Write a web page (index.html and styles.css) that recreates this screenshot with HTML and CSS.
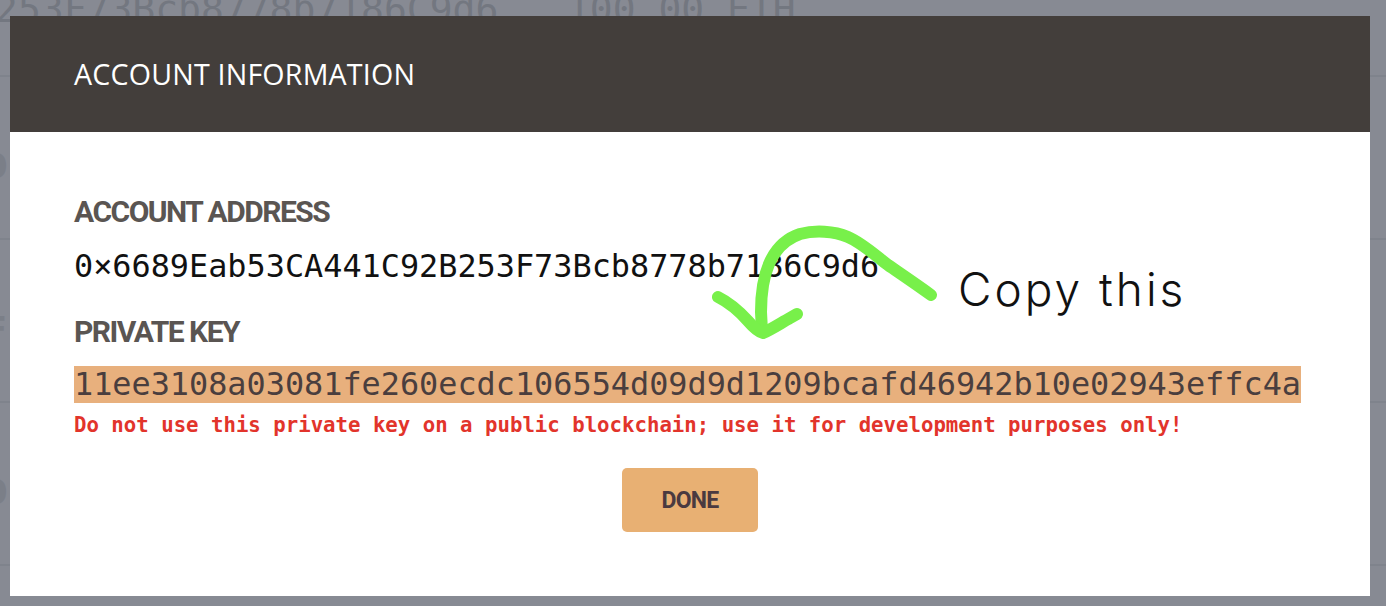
FILE: index.html
```html
<!DOCTYPE html>
<html lang="en">
<head>
<meta charset="utf-8">
<title>Account Information</title>
<link rel="stylesheet" href="styles.css">
</head>
<body>
<div class="page">
  <div class="row row-first"><span class="bg-text">253F73Bcb8778b7186C9d6   100.00 ETH</span></div>
  <div class="row"><span class="edge">0</span></div>
  <div class="row"><span class="edge">F</span></div>
  <div class="row"><span class="edge">0</span></div>
</div>

<div class="modal">
  <div class="modal-header">ACCOUNT INFORMATION</div>
  <div class="modal-body">
    <div class="label">ACCOUNT ADDRESS</div>
    <div class="mono address">0×6689Eab53CA441C92B253F73Bcb8778b7186C9d6</div>
    <div class="label label-key">PRIVATE KEY</div>
    <div class="key-row"><span class="mono key">11ee3108a03081fe260ecdc106554d09d9d1209bcafd46942b10e02943effc4a</span></div>
    <div class="warning">Do not use this private key on a public blockchain; use it for development purposes only!</div>
    <div class="actions"><button class="done">DONE</button></div>
  </div>
</div>

<svg class="annot" width="1386" height="606" viewBox="0 0 1386 606" aria-hidden="true">
  <path d="M931 295 C916 284 901 274 888 265 C875 255 862 243 848 237 C834 231 815 230 800 234 C785 239 775 250 769 264 C763 278 761 295 761 312 L762 331" fill="none" stroke="#78f04a" stroke-width="12" stroke-linecap="round" stroke-linejoin="round"/>
  <path d="M718 297 C730 303 740 312 748 321 C754 328 759 332 763 333 C772 329 781 323 790 318 L797 314" fill="none" stroke="#78f04a" stroke-width="12" stroke-linecap="round" stroke-linejoin="round"/>
</svg>
<div class="copy-note">Copy this</div>
</body>
</html>
```

FILE: styles.css
```css
html, body {
  margin: 0;
  padding: 0;
}
body {
  width: 1386px;
  height: 606px;
  overflow: hidden;
  background: #878a93;
  font-family: "Open Sans", "DejaVu Sans", sans-serif;
  position: relative;
}

/* background page under overlay */
.page {
  margin-top: -86px;
}
.row {
  box-sizing: border-box;
  height: 163px;
  border-bottom: 2px solid #7f838c;
  display: flex;
  align-items: center;
  overflow: hidden;
}
.row-first {
  align-items: flex-end;
  padding-bottom: 44px;
}
.bg-text {
  font-family: "DejaVu Sans Mono", "Liberation Mono", monospace;
  font-size: 38px;
  color: #737780;
  white-space: pre;
  margin-left: -5px;
}
.edge {
  font-family: "DejaVu Sans", sans-serif;
  font-weight: bold;
  font-size: 34px;
  color: #7b7f88;
  margin-left: -16px;
  margin-top: 16px;
}

/* modal */
.modal {
  position: absolute;
  top: 16px;
  left: 10px;
  width: 1360px;
  background: #ffffff;
}
.modal-header {
  box-sizing: border-box;
  height: 116px;
  background: #433e3b;
  color: #ffffff;
  display: flex;
  align-items: center;
  padding: 0 64px 2px;
  font-family: "Open Sans", sans-serif;
  font-size: 28.6px;
  letter-spacing: 0.2px;
}
.modal-body {
  box-sizing: border-box;
  height: 464px;
  padding: 62px 64px 0;
}
.label {
  font-family: "Roboto", "DejaVu Sans Condensed", sans-serif;
  font-weight: bold;
  font-size: 30px;
  line-height: 36px;
  letter-spacing: -1.5px;
  color: #5a5552;
}
.mono {
  font-family: "DejaVu Sans Mono", "Liberation Mono", monospace;
  font-size: 31.85px;
}
.address {
  line-height: 40px;
  margin-top: 16px;
  color: #111111;
}
.label-key {
  margin-top: 28px;
}
.key-row {
  margin-top: 16px;
  display: flex;
}
.key {
  display: block;
  height: 37px;
  line-height: 37px;
  background: #e8b07d;
  color: #4a3e3e;
}
.warning {
  margin-top: 10px;
  font-family: "DejaVu Sans Mono", "Liberation Mono", monospace;
  font-weight: bold;
  font-size: 20.7px;
  line-height: 24px;
  color: #e2342b;
}
.actions {
  margin-top: 31px;
  display: flex;
  justify-content: center;
}
.done {
  width: 136px;
  height: 64px;
  border: none;
  border-radius: 5px;
  background: #e8b073;
  color: #4a3a40;
  font-family: "Roboto", "DejaVu Sans Condensed", sans-serif;
  font-weight: bold;
  font-size: 23px;
  letter-spacing: -0.8px;
  padding: 0;
}

/* hand-drawn annotation */
.annot {
  position: absolute;
  top: 0;
  left: 0;
  pointer-events: none;
}
.copy-note {
  position: absolute;
  left: 958px;
  top: 264px;
  font-family: "Inter", "Lato", sans-serif;
  font-weight: 300;
  font-size: 46px;
  line-height: 50px;
  letter-spacing: 3px;
  color: #111111;
}
```
